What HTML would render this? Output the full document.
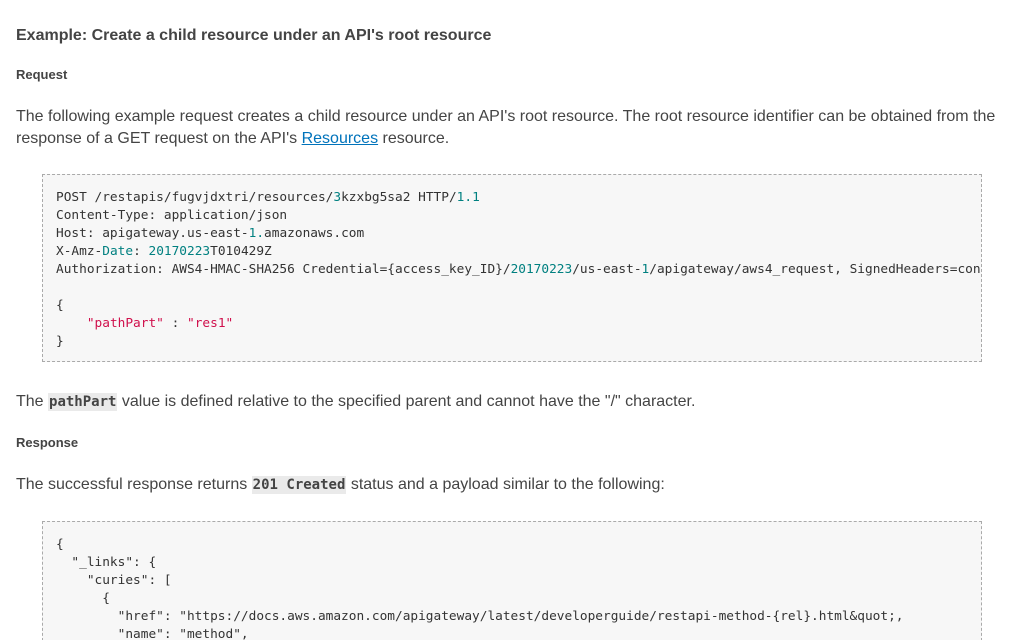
<!DOCTYPE html>
<html style="height:640px;overflow:hidden"><head><meta charset="utf-8"><style>
body{margin:0;background:#fff;color:#444;font-family:"Liberation Sans",sans-serif;width:1024px;height:640px;overflow:hidden}
#w{position:relative;width:1024px;height:640px;overflow:hidden}
.a{position:absolute;left:16px;white-space:nowrap}
h2{font-size:16px;font-weight:bold;margin:0}
.h{font-size:13px;font-weight:bold}
p{margin:0;font-size:16px;line-height:22px}
a{color:#0073bb;text-decoration:underline}
code{font-family:"DejaVu Sans Mono",monospace;font-size:14px;font-weight:bold;background:#eaeaea;padding:1px 1px}
pre{position:absolute;left:42px;width:912px;margin:0;padding:14px 13px 10px;background:#f7f7f7;border:1px dashed #aaa;font-family:"DejaVu Sans Mono",monospace;font-size:12.8px;line-height:18px;color:#333;overflow:hidden;white-space:pre}
.n{color:#008080}.s{color:#d0104c}
</style></head><body><div id="w">
<h2 class="a" style="top:27px">Example: Create a child resource under an API's root resource</h2>
<div class="a h" style="top:67px">Request</div>
<p class="a" style="top:106px">The following example request creates a child resource under an API's root resource. The root resource identifier can be obtained from the<br>response of a GET request on the API's <a>Resources</a> resource.</p>
<pre style="top:174px;height:162px">POST /restapis/fugvjdxtri/resources/<span class="n">3</span>kzxbg5sa2 HTTP/<span class="n">1.1</span>
Content-Type: application/json
Host: apigateway.us-east-<span class="n">1.</span>amazonaws.com
X-Amz-<span class="n">Date</span>: <span class="n">20170223</span>T010429Z
Authorization: AWS4-HMAC-SHA256 Credential={access_key_ID}/<span class="n">20170223</span>/us-east-<span class="n">1</span>/apigateway/aws4_request, SignedHeaders=content-type

{
    <span class="s">"pathPart"</span> : <span class="s">"res1"</span>
}</pre>
<p class="a" style="top:391px">The <code>pathPart</code> value is defined relative to the specified parent and cannot have the "/" character.</p>
<div class="a h" style="top:435px">Response</div>
<p class="a" style="top:474px">The successful response returns <code>201 Created</code> status and a payload similar to the following:</p>
<pre style="top:521px;height:94px">{
  "_links": {
    "curies": [
      {
        "href": "https://docs.aws.amazon.com/apigateway/latest/developerguide/restapi-method-{rel}.html&amp;quot;,
        "name": "method",</pre>
</div></body></html>
